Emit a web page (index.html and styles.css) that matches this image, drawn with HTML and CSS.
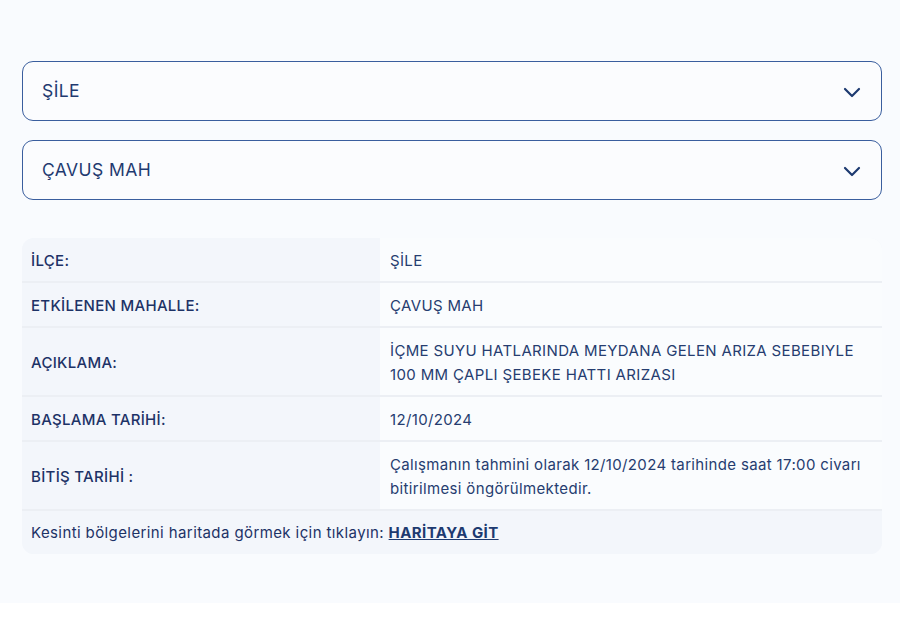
FILE: index.html
```html
<!DOCTYPE html>
<html lang="tr">
<head>
<meta charset="utf-8">
<link rel="stylesheet" href="styles.css">
</head>
<body>
<div class="page">
  <div class="select">
    <span class="select-text">ŞİLE</span>
    <svg class="chev" width="18" height="12" viewBox="0 0 18 12"><path d="M2 3 L9 10 L16 3" fill="none" stroke="#1d3a70" stroke-width="2.2" stroke-linecap="round" stroke-linejoin="round"/></svg>
  </div>
  <div class="select">
    <span class="select-text">ÇAVUŞ MAH</span>
    <svg class="chev" width="18" height="12" viewBox="0 0 18 12"><path d="M2 3 L9 10 L16 3" fill="none" stroke="#1d3a70" stroke-width="2.2" stroke-linecap="round" stroke-linejoin="round"/></svg>
  </div>
  <div class="info">
    <div class="row">
      <div class="label">İLÇE:</div>
      <div class="value">ŞİLE</div>
    </div>
    <div class="row">
      <div class="label">ETKİLENEN MAHALLE:</div>
      <div class="value">ÇAVUŞ MAH</div>
    </div>
    <div class="row">
      <div class="label">AÇIKLAMA:</div>
      <div class="value">İÇME SUYU HATLARINDA MEYDANA GELEN ARIZA SEBEBIYLE 100 MM ÇAPLI ŞEBEKE HATTI ARIZASI</div>
    </div>
    <div class="row">
      <div class="label">BAŞLAMA TARİHİ:</div>
      <div class="value">12/10/2024</div>
    </div>
    <div class="row">
      <div class="label">BİTİŞ TARİHİ :</div>
      <div class="value">Çalışmanın tahmini olarak 12/10/2024 tarihinde saat 17:00 civarı bitirilmesi öngörülmektedir.</div>
    </div>
    <div class="footer">Kesinti bölgelerini haritada görmek için tıklayın: <a class="map-link" href="#">HARİTAYA GİT</a></div>
  </div>
</div>
</body>
</html>
```
FILE: styles.css
```css
html, body {
  margin: 0;
  padding: 0;
  background: #ffffff;
}
body {
  font-family: "Inter", "Noto Sans", sans-serif;
  color: #1d3266;
}
.page {
  background: #f9fbfe;
  height: 603px;
  padding: 61px 18px 0 22px;
  box-sizing: border-box;
}
.select {
  height: 60px;
  box-sizing: border-box;
  border: 1.5px solid #3a5e9e;
  border-radius: 11px;
  display: flex;
  align-items: center;
  justify-content: space-between;
  padding: 0 20px 0 19px;
  margin-bottom: 19px;
  background: #fbfcfe;
}
.select-text {
  font-size: 17.5px;
  letter-spacing: 0.4px;
  color: #1f3a70;
  margin-top: -1px;
}
.chev {
  display: block;
  margin-top: 1px;
}
.info {
  margin-top: 38px;
  border-radius: 12px;
  overflow: hidden;
  background: #f3f6fb;
}
.row {
  display: grid;
  grid-template-columns: 358px 1fr;
  border-bottom: 2px solid #eceff4;
}
.label {
  display: flex;
  align-items: center;
  padding: 11px 9px 8px;
  font-size: 15px;
  letter-spacing: 0.3px;
  line-height: 24px;
  font-weight: 500;
  color: #1d3266;
  background: #f3f6fb;
}
.value {
  padding: 11px 10px 8px;
  font-size: 15px;
  letter-spacing: 0.35px;
  line-height: 24px;
  color: #263d70;
  background: #fafcfe;
}
.footer {
  padding: 10px 9px 9px;
  font-size: 15px;
  letter-spacing: 0.4px;
  line-height: 24px;
  color: #1d3266;
  background: #f3f6fb;
}
.map-link {
  color: #1d3a70;
  font-weight: 700;
  text-decoration: underline;
}
```
